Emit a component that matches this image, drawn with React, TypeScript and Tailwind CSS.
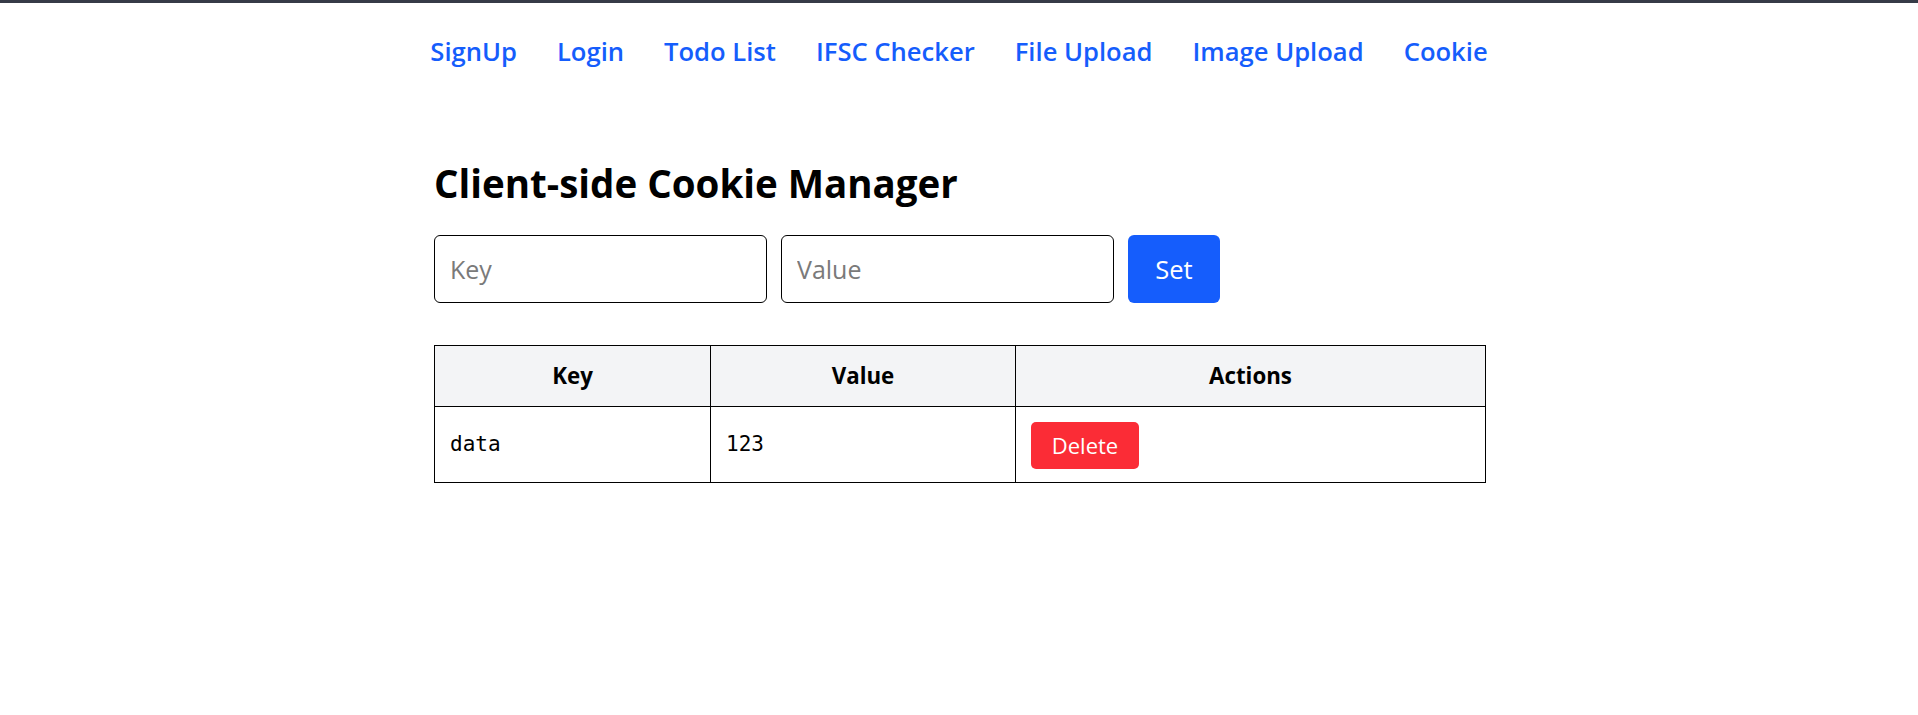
import React, { useState } from "react";

const sans = { fontFamily: '"Open Sans", "Noto Sans", sans-serif' };

export default function App() {
  const [cookies, setCookies] = useState([{ key: "data", value: "123" }]);
  const [k, setK] = useState("");
  const [v, setV] = useState("");

  return (
    <div className="min-h-screen bg-white text-black" style={sans}>
      <div className="h-[3px] bg-[#363b47]" />
      <nav className="flex justify-center gap-[40px] pt-[32px]">
        {["SignUp", "Login", "Todo List", "IFSC Checker", "File Upload", "Image Upload", "Cookie"].map((l) => (
          <a key={l} href="#" className="text-[25.6px] leading-[34px] font-semibold text-[#155dfc]">
            {l}
          </a>
        ))}
      </nav>
      <main className="mx-auto w-[1054px] pl-[2px]">
        <h1 className="mt-[90px] text-[38.5px] leading-[48px] font-bold">Client-side Cookie Manager</h1>
        <div className="mt-[28px] flex gap-[14px]">
          <input
            value={k}
            onChange={(e) => setK(e.target.value)}
            placeholder="Key"
            className="h-[68px] w-[333px] rounded-[6px] border border-black px-[15px] text-[25px] outline-none placeholder:text-[#7a7a7a]"
          />
          <input
            value={v}
            onChange={(e) => setV(e.target.value)}
            placeholder="Value"
            className="h-[68px] w-[333px] rounded-[6px] border border-black px-[15px] text-[25px] outline-none placeholder:text-[#7a7a7a]"
          />
          <button
            onClick={() => {
              if (k) setCookies([...cookies.filter((c) => c.key !== k), { key: k, value: v }]);
            }}
            className="h-[68px] w-[92px] rounded-[6px] bg-[#155dfc] text-[25.5px] text-white"
          >
            Set
          </button>
        </div>
        <table className="mt-[42px] w-[1052px] border-collapse border border-black">
          <thead>
            <tr className="bg-[#f3f4f6]">
              <th className="h-[61px] w-[276px] border border-black p-0 text-center text-[22.3px] font-bold">Key</th>
              <th className="h-[61px] w-[305px] border border-black p-0 text-center text-[22.3px] font-bold">Value</th>
              <th className="h-[61px] border border-black p-0 text-center text-[22.3px] font-bold">Actions</th>
            </tr>
          </thead>
          <tbody>
            {cookies.map((c) => (
              <tr key={c.key}>
                <td className="h-[76px] border border-black px-[15px] text-[21px]" style={{ fontFamily: '"DejaVu Sans Mono", monospace' }}>
                  {c.key}
                </td>
                <td className="h-[76px] border border-black px-[15px] text-[21px]" style={{ fontFamily: '"DejaVu Sans Mono", monospace' }}>
                  {c.value}
                </td>
                <td className="h-[76px] border border-black px-[15px] pt-[1px]">
                  <button
                    onClick={() => setCookies(cookies.filter((x) => x.key !== c.key))}
                    className="h-[47px] w-[108px] rounded-[5px] bg-[#fb2c36] text-[22px] text-white"
                  >
                    Delete
                  </button>
                </td>
              </tr>
            ))}
          </tbody>
        </table>
      </main>
    </div>
  );
}
